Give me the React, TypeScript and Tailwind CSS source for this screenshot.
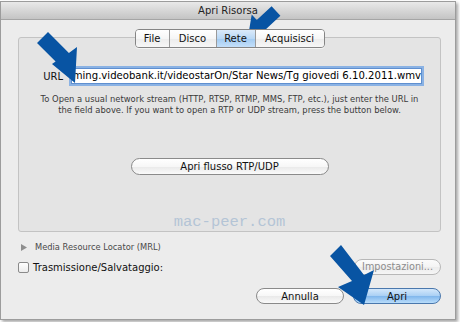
import React from "react";

type Pt = [number, number];

function arrowPoints(tail: Pt, tip: Pt, sw: number, hw: number, hl: number): string {
  const [ax, ay] = tail;
  const [tx, ty] = tip;
  const dx = tx - ax;
  const dy = ty - ay;
  const L = Math.hypot(dx, dy);
  const ux = dx / L;
  const uy = dy / L;
  const nx = -uy;
  const ny = ux;
  const bx = tx - hl * ux;
  const by = ty - hl * uy;
  const pts: Pt[] = [
    [ax + sw * nx, ay + sw * ny],
    [bx + sw * nx, by + sw * ny],
    [bx + hw * nx, by + hw * ny],
    [tx, ty],
    [bx - hw * nx, by - hw * ny],
    [bx - sw * nx, by - sw * ny],
    [ax - sw * nx, ay - sw * ny],
  ];
  return pts.map((p) => `${p[0].toFixed(1)},${p[1].toFixed(1)}`).join(" ");
}

const font = { fontFamily: '"DejaVu Sans", "Liberation Sans", sans-serif' };

function Tab({ label, selected, first }: { label: string; selected?: boolean; first?: boolean }) {
  return (
    <div
      className={
        "h-full flex items-center justify-center text-[10px] text-[#111] " +
        (first ? "" : "border-l border-[#9a9a9a] ") +
        (selected
          ? "bg-[linear-gradient(to_bottom,#dbeafa_0%,#b9d8f6_50%,#a2cbf2_51%,#c4e0fa_100%)]"
          : "bg-[linear-gradient(to_bottom,#ffffff_0%,#f6f6f6_50%,#ececec_51%,#f7f7f7_100%)]")
      }
      style={{ width: first ? 33 : label === "Disco" ? 47 : label === "Rete" ? 39 : 69 }}
    >
      {label}
    </div>
  );
}

export default function App() {
  return (
    <div className="relative w-[460px] h-[322px] bg-white overflow-hidden" style={font}>
      <div className="mt-[1px] w-[456px] h-[319px] border border-[#9c9c9c] shadow-[2px_2px_3px_rgba(0,0,0,0.35)] flex flex-col bg-[#ececec]">
        {/* title bar */}
        <div className="h-[18px] shrink-0 bg-[linear-gradient(to_bottom,#e9e9e9,#c4c4c4)] border-b border-[#a5a5a5] flex items-center justify-center text-[10px] text-[#222]">
          Apri Risorsa
        </div>
        {/* body */}
        <div className="flex-1 flex flex-col pl-[17px] pr-[15px]">
          {/* tabs */}
          <div className="relative z-10 mt-[9px] w-[423px] flex justify-center">
            <div className="h-[19px] flex rounded-[4px] border border-[#858585] overflow-hidden shadow-[0_1px_0_rgba(255,255,255,0.6)]">
              <Tab label="File" first />
              <Tab label="Disco" />
              <Tab label="Rete" selected />
              <Tab label="Acquisisci" />
            </div>
          </div>
          {/* group box */}
          <div className="-mt-[11px] w-[423px] h-[195px] rounded-[3px] border border-[#c3c3c3] bg-[#e4e4e4] flex flex-col items-center pt-[28px]">
            <div className="w-full flex items-center justify-end pr-[16px] gap-[6px]">
              <span className="text-[10px] text-[#111]">URL</span>
              <div className="w-[355px] h-[20px] bg-white border-2 border-[#8ab2e4] shadow-[inset_0_0_0_1px_#5f8fcf] flex items-center justify-end pr-[1px] whitespace-nowrap text-[10.1px] text-black">
                <span>ming.videobank.it/videostarOn/Star News/Tg giovedi 6.10.2011.wmv</span>
              </div>
            </div>
            <div className="mt-[8px] text-center text-[8.4px] leading-[11px] text-[#3a3a3a]">
              <div>To Open a usual network stream (HTTP, RTSP, RTMP, MMS, FTP, etc.), just enter the URL in</div>
              <div>the field above. If you want to open a RTP or UDP stream, press the button below.</div>
            </div>
            <div className="mt-[42px] w-[198px] h-[17px] rounded-full border border-[#8a8a8a] bg-[linear-gradient(to_bottom,#ffffff_0%,#f7f7f7_50%,#e9e9e9_51%,#fafafa_100%)] flex items-center justify-center text-[10px] text-[#111]">
              Apri flusso RTP/UDP
            </div>
            <div className="mt-[40px] text-[15.5px] leading-[15px] text-[#b4c4d6]" style={{ fontFamily: '"Liberation Mono", monospace' }}>
              mac-peer.com
            </div>
          </div>
          {/* MRL */}
          <div className="mt-[9px] h-[12px] flex items-center pl-[3px] gap-[8px]">
            <svg width="6" height="7" viewBox="0 0 6 7">
              <path d="M0 0 L6 3.5 L0 7 Z" fill="#8e8e8e" />
            </svg>
            <span className="text-[8.3px] text-[#4a4a4a]">Media Resource Locator (MRL)</span>
          </div>
          {/* checkbox row */}
          <div className="mt-[6px] h-[16px] w-[423px] flex items-center justify-between">
            <div className="flex items-center gap-[4px]">
              <div className="w-[11px] h-[11px] rounded-[2px] border border-[#8a8a8a] bg-[linear-gradient(to_bottom,#ffffff,#ececec)]" />
              <span className="text-[10px] text-[#111]">Trasmissione/Salvataggio:</span>
            </div>
            <div className="w-[87px] h-[16px] rounded-full border border-[#b8b8b8] bg-[linear-gradient(to_bottom,#fbfbfb_0%,#f4f4f4_50%,#ececec_51%,#f6f6f6_100%)] flex items-center justify-center text-[9.7px] text-[#8c8c8c]">
              Impostazioni...
            </div>
          </div>
          {/* bottom buttons */}
          <div className="mt-[13px] w-[423px] flex justify-end gap-[9px]">
            <div className="w-[88px] h-[16px] rounded-full border border-[#8a8a8a] bg-[linear-gradient(to_bottom,#ffffff_0%,#f7f7f7_50%,#e9e9e9_51%,#fafafa_100%)] flex items-center justify-center text-[10px] text-[#111]">
              Annulla
            </div>
            <div className="w-[88px] h-[16px] rounded-full border border-[#4a78ad] bg-[linear-gradient(to_bottom,#d4e8fb_0%,#a9cff4_50%,#80b6ec_51%,#b9ddfb_100%)] flex items-center justify-center text-[10px] text-[#111]">
              Apri
            </div>
          </div>
        </div>
      </div>
      {/* annotation arrows */}
      <svg className="absolute left-0 top-0 pointer-events-none" width="460" height="322" viewBox="0 0 460 322">
        <polygon points="37,43 48,32 68.9,52.9 77,47 75,83 52,64 55.6,61.6" fill="#0854a3" />
        <polygon points={arrowPoints([276, 11], [248, 37], 6.5, 14, 18)} fill="#0854a3" />
        <polygon points="330,256 341,245 364,275 374,270 364,305 338,287 352,281" fill="#0854a3" />
      </svg>
    </div>
  );
}
